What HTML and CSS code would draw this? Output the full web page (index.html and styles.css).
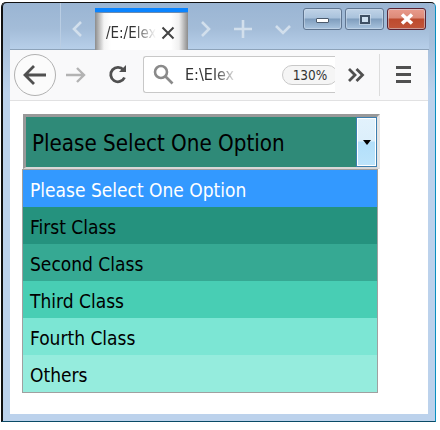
FILE: index.html
```html
<!DOCTYPE html>
<html lang="en">
<head>
<meta charset="utf-8">
<title>Select</title>
<link rel="stylesheet" href="styles.css">
</head>
<body>
<div class="window">
  <div class="titlebar">
    <div class="tabzone">
      <svg class="chev-left" width="12" height="18" viewBox="0 0 12 18"><path d="M10 2 3 9l7 7" class="ico-light"/></svg>
      <div class="tab">
        <span class="tab-text">/E:/Elex</span>
        <svg class="tab-close" width="14" height="14" viewBox="0 0 14 14"><path d="M1.5 1.5l11 11M12.5 1.500l-11 11" class="ico-dark"/></svg>
      </div>
      <svg class="chev-right" width="12" height="18" viewBox="0 0 12 18"><path d="M2 2l7 7-7 7" class="ico-light"/></svg>
      <svg class="plus" width="20" height="20" viewBox="0 0 20 20"><path d="M10 1v18M1 10h18" class="ico-light"/></svg>
      <svg class="chev-down" width="18" height="12" viewBox="0 0 18 12"><path d="M2 2l7 7 7-7" class="ico-light"/></svg>
    </div>
    <div class="controls">
      <div class="ctl"><span class="min-mark"></span></div>
      <div class="ctl"><span class="max-mark"></span></div>
      <div class="ctl ctl-close"><svg width="14" height="12" viewBox="0 0 14 12"><path d="M2 1.500l10 9M12 1.500l-10 9" class="ico-x"/></svg></div>
    </div>
  </div>
  <div class="toolbar">
    <div class="back">
      <svg width="26" height="22" viewBox="0 0 26 22"><path d="M24 11H3M12 2 3 11l9 9" class="ico-tool"/></svg>
    </div>
    <svg class="forward" width="22" height="18" viewBox="0 0 22 18"><path d="M1 9h18M12 2l7 7-7 7" class="ico-dim"/></svg>
    <svg class="reload" width="20" height="20" viewBox="0 0 20 20"><path d="M16.500 12.500A7.200 7.200 0 1 1 15.500 5" class="ico-tool"/><path d="M11 7h7V0z" class="fill-tool"/></svg>
    <div class="urlbar">
      <svg class="search" width="21" height="21" viewBox="0 0 21 21"><circle cx="8" cy="8" r="6" class="ico-search"/><path d="M12.500 12.500l7 7" class="ico-search"/></svg>
      <span class="url-text">E:\Elex</span>
      <span class="zoom-pill">130%</span>
    </div>
    <svg class="overflow" width="18" height="14" viewBox="0 0 18 14"><path d="M2 1l6 6-6 6M9.500 1l6 6-6 6" class="ico-over"/></svg>
    <span class="sep"></span>
    <div class="menu"><span></span><span></span><span></span></div>
  </div>
  <div class="content">
    <div class="select">
      <span class="select-text">Please Select One Option</span>
      <div class="select-btn"><span class="arrow"></span></div>
    </div>
    <ul class="list">
      <li class="opt opt-active">Please Select One Option</li>
      <li class="opt opt-1">First Class</li>
      <li class="opt opt-2">Second Class</li>
      <li class="opt opt-3">Third Class</li>
      <li class="opt opt-4">Fourth Class</li>
      <li class="opt opt-5">Others</li>
    </ul>
  </div>
</div>
</body>
</html>
```
FILE: styles.css
```css
* { box-sizing: border-box; }
html, body { margin: 0; padding: 0; background: #fff; }
body { width: 440px; height: 430px; overflow: hidden; padding: 2px 0 0 1px; font-family: "DejaVu Sans", sans-serif; font-stretch: condensed; }

.window {
  width: 435px; height: 420px;
  border: 1px solid #111; border-right-color: #0a8fc0; border-bottom-color: #0a4a66;
  border-radius: 5px 5px 0 0;
  padding: 0 7px 7px 8px;
  background: linear-gradient(#9fb8d4 0, #a8c0db 40px, #bcd2ec 90px);
  box-shadow: inset 1px 0 0 #111;
  display: flex; flex-direction: column;
}

.titlebar {
  height: 47px; margin: 0 -1px 0 0;
  background: linear-gradient(#9ab5d3 0, #a3bcd8 55%, #b7cfe9 100%);
  border-bottom: 1px solid #8da3ba;
  display: flex; justify-content: space-between;
}
.tabzone {
  display: flex; align-items: center; padding-left: 61px;
  background: linear-gradient(90deg, transparent 50px, #b9cde3 50px, #b9cde3 51px, transparent 51px);
}
.chev-left { margin-top: 6px; }
.tab {
  width: 93px; height: 42px; margin: 5px 0 0 12px; align-self: flex-start;
  border-top: 4px solid #0a84ff;
  box-shadow: inset 0 1px 0 #6b8bb0;
  background:
    linear-gradient(90deg, #8c8c8c 0, #f4f4f4 9px, #fff 16px, #fff 76px, #f0f0f0 84px, #8c8c8c 93px);
  display: flex; align-items: center; padding: 3px 13px 0 11px; justify-content: space-between;
}
.tab-text {
  width: 50px; overflow: hidden; white-space: nowrap; font-size: 15px; color: #333;
  -webkit-mask-image: linear-gradient(90deg, #000 55%, transparent 100%);
  mask-image: linear-gradient(90deg, #000 55%, transparent 100%);
}
.chev-right { margin: 6px 0 0 12px; }
.plus { margin: 6px 0 0 21px; }
.chev-down { margin: 8px 0 0 21px; }
.ico-light { fill: none; stroke: #d2dfec; stroke-width: 2.6; }
.ico-dark { fill: none; stroke: #444; stroke-width: 2; }

.controls { display: flex; gap: 3px; padding: 5px 3px 0 0; align-self: flex-start; }
.ctl {
  width: 39px; height: 22px; border: 1px solid #5f7590; border-radius: 3px;
  background: linear-gradient(#c0d3e7 0, #a9c2dc 45%, #7f9dbd 50%, #a9c4df 100%);
  box-shadow: inset 0 0 0 1px #d3e0ee80;
  display: flex; align-items: center; justify-content: center;
}
.ctl-close {
  width: 39px; border-color: #5a2333;
  background: linear-gradient(#e99b8c 0, #dc8a78 45%, #bd4a2e 50%, #c2553a 100%);
}
.min-mark { width: 13px; height: 5px; background: #fff; border: 1px solid #4b5a6c; margin-top: 2px; border-radius: 1px; }
.max-mark { width: 10px; height: 9px; background: #cfe0f0; border: 2px solid #3f5064; box-shadow: 0 0 0 1px #e2ecf680; }
.ico-x { fill: none; stroke: #fff; stroke-width: 3.500; }

.toolbar {
  height: 51px; background: #f9f9fa; border-bottom: 1px solid #e1e1e2;
  display: flex; align-items: center; padding: 0 0 1px 4px;
}
.back {
  width: 42px; height: 42px; border: 1px solid #b1b1b1; border-radius: 50%; background: #fbfbfb;
  display: flex; align-items: center; justify-content: center; flex: none;
}
.forward { margin-left: 9px; flex: none; }
.reload { margin-left: 21px; flex: none; }
.ico-tool { fill: none; stroke: #505050; stroke-width: 2.800; }
.fill-tool { fill: #505050; }
.ico-dim { fill: none; stroke: #b3b3b3; stroke-width: 2.400; }

.urlbar {
  width: 192px; height: 37px; margin-left: 15px; flex: none;
  border: 1px solid #c8c8c8; border-right: 0; border-radius: 3px 0 0 3px; background: #fff;
  display: flex; align-items: center; padding-left: 9px; overflow: hidden;
}
.search { flex: none; }
.ico-search { fill: none; stroke: #8a8a8a; stroke-width: 2.600; }
.url-text {
  width: 53px; margin-left: 11px; flex: none; overflow: hidden; white-space: nowrap; font-size: 16px; color: #333;
  -webkit-mask-image: linear-gradient(90deg, #000 55%, transparent 100%);
  mask-image: linear-gradient(90deg, #000 55%, transparent 100%);
}
.zoom-pill {
  margin-left: 44px; width: 56px; height: 20px; flex: none; border: 1px solid #c8c8c8; border-radius: 10px;
  background: #f5f5f5; font-size: 13.500px; line-height: 18px; text-align: center; color: #333;
}
.overflow { margin-left: 12px; flex: none; }
.ico-over { fill: none; stroke: #505050; stroke-width: 2.800; }
.sep { width: 1px; height: 42px; background: #dcdcdc; margin-left: 14px; flex: none; }
.menu { margin-left: 16px; width: 15px; display: flex; flex-direction: column; gap: 4.500px; flex: none; }
.menu span { display: block; height: 2.800px; background: #505050; }

.content { flex: 1; background: #fff; padding: 13px 0 0 12px; }
.select {
  width: 357px; height: 55px; margin-left: 1px;
  background: #2f8a78;
  border-style: solid; border-width: 3px 3px 2px 3px;
  border-color: #999 #e4e4e4 #d8d8d8 #999;
  display: flex; justify-content: space-between;
}
.select-text { font-size: 22.200px; line-height: 52px; padding-left: 6px; color: #000; white-space: nowrap; }
.select-btn {
  width: 21px; height: 50px; border: 1px solid #3c7fb0; box-shadow: inset 0 0 0 1px #fff;
  background: linear-gradient(#e2f2fc 0, #dceffb 48%, #b2dffa 50%, #bde4fb 100%);
  display: flex; align-items: center; justify-content: center;
}
.arrow { width: 0; height: 0; border-style: solid; border-width: 5px 4.500px 0; border-color: #000 transparent transparent; margin-top: 1px; }

.list {
  list-style: none; margin: 0; padding: 0; width: 356px; height: 224px;
  border: 1px solid #a0a0a0;
}
.opt { height: 37px; line-height: 40px; padding-left: 7px; font-size: 19px; color: #000; white-space: nowrap; }
.opt-active { background: #3399ff; color: #fff; }
.opt-1 { background: #25927e; }
.opt-2 { background: #36a993; }
.opt-3 { background: #48ceb4; }
.opt-4 { background: #7ce6d4; }
.opt-5 { background: #95ecdd; }
```
